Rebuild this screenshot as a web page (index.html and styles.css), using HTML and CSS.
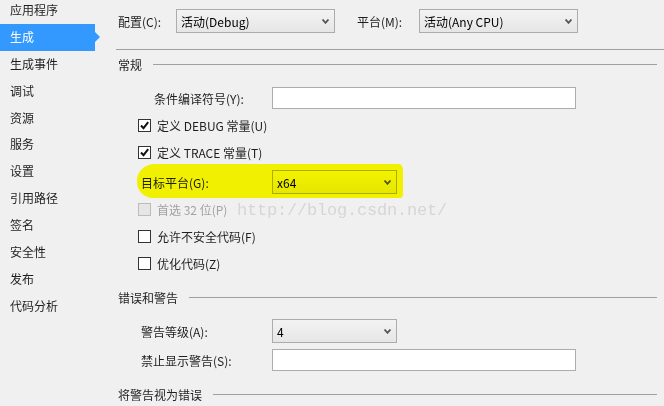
FILE: index.html
```html
<!DOCTYPE html>
<html lang="zh-CN">
<head>
  <meta charset="UTF-8" />
  <title>生成</title>
  <link rel="stylesheet" href="styles.css">
</head>
<body>
  <div class="page">
    <ul class="nav">
      <li>应用程序</li>
      <li class="active">生成</li>
      <li>生成事件</li>
      <li>调试</li>
      <li>资源</li>
      <li>服务</li>
      <li>设置</li>
      <li>引用路径</li>
      <li>签名</li>
      <li>安全性</li>
      <li>发布</li>
      <li>代码分析</li>
    </ul>

    <div class="main">
      <div class="toprow">
        <span class="lbl-config">配置(C):</span>
        <div class="select wide"><span>活动(Debug)</span><svg width="7" height="5" viewBox="0 0 7 5"><path d="M0.5 0.5 L3.5 3.8 L6.5 0.5" fill="none" stroke="#555" stroke-width="1.8"/></svg></div>
        <span class="lbl-platform">平台(M):</span>
        <div class="select wide"><span>活动(Any CPU)</span><svg width="7" height="5" viewBox="0 0 7 5"><path d="M0.5 0.5 L3.5 3.8 L6.5 0.5" fill="none" stroke="#555" stroke-width="1.8"/></svg></div>
      </div>
      <div class="rule"></div>

      <div class="section s-general">常规</div>

      <div class="row r-symbols">
        <span class="lbl lbl-symbols">条件编译符号(Y):</span>
        <div class="textbox"></div>
      </div>
      <div class="check r-debug"><span class="box on"><svg width="11" height="11" viewBox="0 0 11 11"><path d="M2 5.5 L4.5 8.2 L9.2 2.2" fill="none" stroke="#111" stroke-width="2"/></svg></span>定义 DEBUG 常量(U)</div>
      <div class="check r-trace"><span class="box on"><svg width="11" height="11" viewBox="0 0 11 11"><path d="M2 5.5 L4.5 8.2 L9.2 2.2" fill="none" stroke="#111" stroke-width="2"/></svg></span>定义 TRACE 常量(T)</div>
      <div class="row r-target">
        <span class="lbl lbl-target">目标平台(G):</span>
        <div class="select narrow"><span>x64</span><svg width="7" height="5" viewBox="0 0 7 5"><path d="M0.5 0.5 L3.5 3.8 L6.5 0.5" fill="none" stroke="#555" stroke-width="1.8"/></svg></div>
      </div>
      <div class="check disabled r-prefer"><span class="box"></span>首选 32 位(P)</div>
      <div class="check r-unsafe"><span class="box"></span>允许不安全代码(F)</div>
      <div class="check r-optimize"><span class="box"></span>优化代码(Z)</div>

      <div class="section s-errors">错误和警告</div>
      <div class="row r-level">
        <span class="lbl lbl-target">警告等级(A):</span>
        <div class="select narrow"><span>4</span><svg width="7" height="5" viewBox="0 0 7 5"><path d="M0.5 0.5 L3.5 3.8 L6.5 0.5" fill="none" stroke="#555" stroke-width="1.8"/></svg></div>
      </div>
      <div class="row r-suppress">
        <span class="lbl lbl-target">禁止显示警告(S):</span>
        <div class="textbox"></div>
      </div>
      <div class="section s-treat">将警告视为错误</div>

      <div class="highlight"></div>
      <div class="watermark">http://blog.csdn.net/</div>
    </div>
  </div>
</body>
</html>
```

FILE: styles.css
```css
body {
  margin: 0;
  background: #f0f0f0;
  color: #1e1e1e;
  font-family: "Noto Sans CJK SC", sans-serif;
  font-size: 12px;
  overflow: hidden;
}
.page {
  display: flex;
  width: 664px;
  height: 406px;
  overflow: hidden;
}
.nav {
  list-style: none;
  margin: -3px 0 0 0;
  padding: 0;
  width: 100px;
  flex: none;
}
.nav li {
  position: relative;
  width: 85px;
  height: 26.9px;
  line-height: 26.9px;
  padding-left: 10px;
  white-space: nowrap;
}
.nav li.active {
  background: #3399ff;
  color: #fff;
}
.nav li.active::after {
  content: "";
  position: absolute;
  right: -5px;
  top: 8px;
  border-left: 5px solid #3399ff;
  border-top: 5.5px solid transparent;
  border-bottom: 5.5px solid transparent;
}
.main {
  position: relative;
  flex: 1;
  padding: 9px 7px 0 18px;
}
.toprow {
  display: flex;
  align-items: center;
  height: 24px;
}
.lbl-config {
  width: 58px;
}
.lbl-platform {
  width: 62px;
  margin-left: 22px;
}
.select {
  box-sizing: border-box;
  display: flex;
  align-items: center;
  justify-content: space-between;
  height: 24px;
  padding: 0 5px 0 4px;
  border: 1px solid #acacac;
  background: linear-gradient(#f3f3f3, #e6e6e6);
  color: #000;
}
.select.wide {
  width: 159px;
}
.select.narrow {
  width: 125px;
}
.rule {
  margin: 16px -7px 0 -2px;
  border-top: 1px solid #a0a0a0;
}
.section {
  display: flex;
  align-items: center;
  height: 16px;
  white-space: nowrap;
}
.section::after {
  content: "";
  flex: 1;
  margin-left: 11px;
  border-top: 1px solid #a0a0a0;
}
.s-general {
  margin-top: 6px;
}
.s-errors {
  margin-top: 12px;
}
.s-treat {
  margin-top: 15px;
}
.row {
  display: flex;
  align-items: center;
}
.lbl {
  box-sizing: border-box;
  white-space: nowrap;
}
.lbl-symbols {
  width: 154px;
  padding-left: 36px;
}
.lbl-target {
  width: 154px;
  padding-left: 23px;
}
.textbox {
  box-sizing: border-box;
  width: 304px;
  height: 22px;
  background: #fff;
  border: 1px solid #acacac;
}
.r-symbols {
  margin-top: 15px;
}
.check {
  display: flex;
  align-items: center;
  height: 27px;
  padding-left: 20px;
}
.check .box {
  box-sizing: border-box;
  display: flex;
  align-items: center;
  justify-content: center;
  width: 13px;
  height: 13px;
  margin-right: 6px;
  background: #fff;
  border: 1px solid #333;
}
.check.disabled {
  color: #a2a2a2;
}
.check.disabled .box {
  background: #e6e6e6;
  border-color: #bcbcbc;
}
.r-debug {
  margin-top: 3px;
}
.r-target {
  margin-top: 4px;
}
.r-prefer {
  margin-top: 1px;
  height: 28px;
}
.r-level {
  margin-top: 14px;
}
.r-suppress {
  margin-top: 6px;
}
.highlight {
  position: absolute;
  left: 37px;
  top: 164px;
  width: 266px;
  height: 34px;
  background: #ffff00;
  mix-blend-mode: multiply;
  border-radius: 18px 4px 3px 16px / 16px 6px 4px 16px;
}
.watermark {
  position: absolute;
  left: 137px;
  top: 201px;
  font-family: "Liberation Mono", monospace;
  font-size: 17px;
  letter-spacing: -0.2px;
  color: #d6d6d6;
  white-space: nowrap;
}
```
